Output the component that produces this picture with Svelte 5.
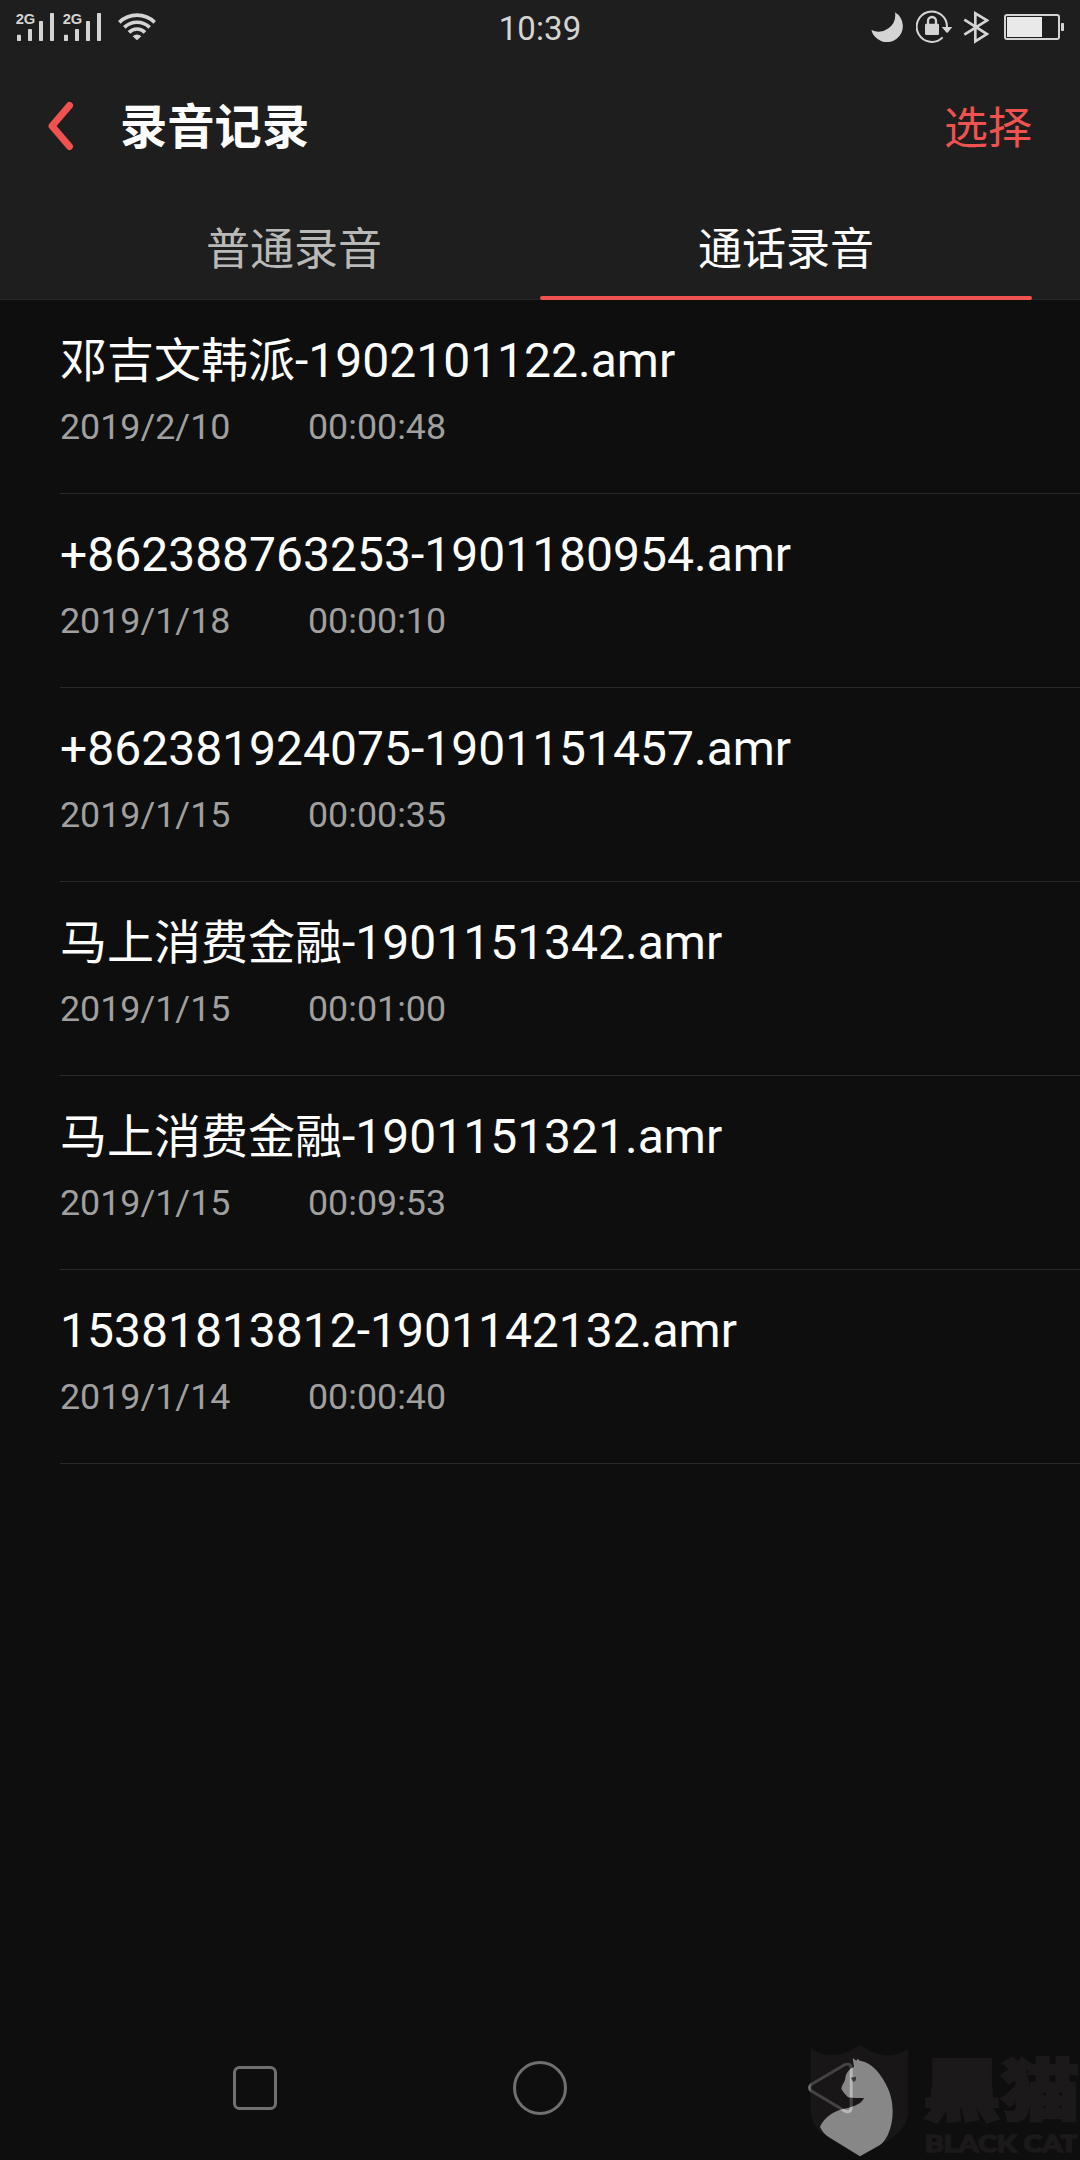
<script>
  const tabs = [
    { label: '普通录音', active: false },
    { label: '通话录音', active: true },
  ];
  const recordings = [
    { contact: '邓吉文韩派', file: '-1902101122.amr', date: '2019/2/10', length: '00:00:48' },
    { contact: '', file: '+862388763253-1901180954.amr', date: '2019/1/18', length: '00:00:10' },
    { contact: '', file: '+862381924075-1901151457.amr', date: '2019/1/15', length: '00:00:35' },
    { contact: '马上消费金融', file: '-1901151342.amr', date: '2019/1/15', length: '00:01:00' },
    { contact: '马上消费金融', file: '-1901151321.amr', date: '2019/1/15', length: '00:09:53' },
    { contact: '', file: '15381813812-1901142132.amr', date: '2019/1/14', length: '00:00:40' },
  ];
</script>

<div class="screen">
  <header>
    <div class="status">
      <div class="side">
        {#each [1, 2] as sim (sim)}
          <svg class="signal" viewBox="48 30 114 99" width="38" height="33">
            <text x="47" y="72" textLength="59" lengthAdjust="spacingAndGlyphs">2G</text>
            <rect x="51" y="104" width="12" height="19" rx="2" />
            <rect x="84" y="87" width="12" height="36" rx="2" />
            <rect x="117" y="63" width="12" height="60" rx="2" />
            <rect x="150" y="39" width="12" height="84" rx="2" />
          </svg>
        {/each}
        <svg class="wifi" viewBox="354 30 114 99" width="38" height="33">
          <path class="arc" d="M358 67 A76 76 0 0 1 464 67" />
          <path class="arc" d="M373 82 A55 55 0 0 1 449 82" />
          <path class="arc" d="M387 97 A34 34 0 0 1 435 97" />
          <path d="M398 109 A19 19 0 0 1 424 109 L411 121 Z" />
        </svg>
      </div>
      <time>10:39</time>
      <div class="side right">
        <svg viewBox="33 30 99 102" width="33" height="34">
          <path d="M105 37 A48 48 0 1 1 34 90 A50 50 0 0 0 105 37 Z" />
        </svg>
        <svg class="lock" viewBox="168 30 111 102" width="37" height="34">
          <path class="ring" d="M261 81 A45.500 45.500 0 1 0 248 112" />
          <path d="M245 81 H277 L263 98 H260 Z" />
          <rect x="195" y="71" width="42" height="34" rx="4" />
          <path class="shackle" d="M204 73 V63 A12 12 0 0 1 228 63 V73" />
        </svg>
        <svg class="bluetooth" viewBox="309 30 78 102" width="26" height="34">
          <path d="M313 59 L381 102 L346 124 V40 L381 61 L313 104" />
        </svg>
        <svg class="battery" viewBox="432 30 183 102" width="61" height="34">
          <rect class="case" x="435" y="45" width="162" height="72" rx="6" />
          <rect class="charge" x="441" y="51" width="105" height="60" />
          <rect x="603" y="69" width="9" height="24" rx="2" />
        </svg>
      </div>
    </div>

    <div class="bar">
      <svg class="back" viewBox="0 0 26 50" width="26" height="50">
        <path d="M21.500 4.500 L4 25 L21.500 45.500" />
      </svg>
      <h1>录音记录</h1>
      <span class="select">选择</span>
    </div>

    <nav class="tabs">
      {#each tabs as tab (tab.label)}
        <div class="tab" class:active={tab.active}>{tab.label}</div>
      {/each}
    </nav>
  </header>

  <main>
    {#each recordings as item (item.file)}
      <article>
        <div class="name">{#if item.contact}<span class="contact">{item.contact}</span>{/if}{item.file}</div>
        <div class="meta"><span class="date">{item.date}</span><span>{item.length}</span></div>
      </article>
    {/each}
  </main>

  <footer>
    <svg viewBox="0 0 44 44" width="44" height="44"><rect x="1.500" y="1.500" width="41" height="41" rx="5" /></svg>
    <svg viewBox="0 0 54 54" width="54" height="54"><circle cx="27" cy="27" r="25.500" /></svg>
    <svg viewBox="84 94 135 157" width="45" height="52">
      <path class="triangle" d="M93 162 L193 103 Q214 94 214 116 V230 Q214 250 195 242 L93 181 Q84 172 93 162 Z" />
    </svg>
  </footer>

  <svg class="watermark" viewBox="0 0 900 390" width="300" height="130">
    <defs>
      <path id="cat" d="M218 84 L229 92 L233 86 L240 92 C275 97 306 132 326 180 C342 220 342 272 326 308 C318 328 307 340 300 345 L240 379 L147 322 C134 313 125 303 120 290 C132 263 160 243 193 236 C222 230 244 222 252 204 C236 203 220 205 204 202 C197 194 188 185 184 176 C184 166 196 155 196 143 C198 127 210 116 222 111 Z" />
      <mask id="around-cat">
        <rect width="900" height="390" fill="white" />
        <use href="#cat" fill="black" />
      </mask>
    </defs>
    <path class="shield" mask="url(#around-cat)" d="M92 53 Q155 101 240 46 Q322 101 384 56 V245 C384 293 342 322 300 345 L240 382 L147 325 C110 300 92 274 92 240 Z" />
    <use class="cat" href="#cat" />
    <path class="eye" d="M213 143 L228 140 Q230 155 219 155 Z" />
    <text class="brand" x="428" y="254" textLength="470" lengthAdjust="spacingAndGlyphs">黑猫</text>
    <text class="latin" x="434" y="366" textLength="459" lengthAdjust="spacingAndGlyphs">BLACK CAT</text>
  </svg>
</div>

<style>
  :global(body) {
    background: #0e0e0e;
  }
  .screen {
    position: relative;
    display: flex;
    flex-direction: column;
    width: 1080px;
    height: 2160px;
    overflow: hidden;
    background: #0e0e0e;
    color: #fff;
    font-family: Roboto, 'Noto Sans CJK SC', sans-serif;
  }
  svg {
    display: block;
    flex: none;
  }
  header {
    box-sizing: border-box;
    height: 300px;
    background: #1e1e1e;
    border-bottom: 1px solid #252828;
  }
  .status {
    display: grid;
    grid-template-columns: 1fr auto 1fr;
    height: 54px;
    padding: 0 15px 0 16px;
    fill: #d4d4d4;
    color: #d4d4d4;
  }
  .side {
    display: flex;
    gap: 9px;
    padding-top: 10px;
  }
  .right {
    justify-content: flex-end;
    gap: 10px;
  }
  .signal text {
    font: bold 43px 'Liberation Sans', sans-serif;
  }
  .wifi {
    margin-left: 8px;
  }
  .arc,
  .ring,
  .shackle,
  .bluetooth path,
  .case {
    fill: none;
    stroke: #d4d4d4;
  }
  .arc {
    stroke-width: 11;
  }
  .ring,
  .case {
    stroke-width: 6;
  }
  .shackle {
    stroke-width: 7;
  }
  .bluetooth path {
    stroke-width: 8;
  }
  .lock {
    margin-left: 2px;
  }
  .battery {
    margin-left: 5px;
  }
  .charge {
    fill: #e9e9e9;
  }
  time {
    margin-left: -1px;
    font-size: 33px;
    line-height: 58px;
    letter-spacing: 0.1px;
  }
  .bar {
    display: flex;
    align-items: center;
    height: 144px;
    padding: 0 48px;
  }
  .back {
    fill: none;
    stroke: #f0524f;
    stroke-width: 7;
    stroke-linecap: round;
    stroke-linejoin: round;
  }
  h1 {
    flex: 1;
    margin: 0 0 0 46px;
    padding-top: 3px;
    font-size: 47.3px;
    font-weight: 700;
    line-height: 60px;
  }
  .select {
    padding-top: 5px;
    color: #f0524f;
    font-size: 44px;
    line-height: 60px;
  }
  .tabs {
    display: grid;
    grid-template-columns: 1fr 1fr;
    height: 102px;
    padding: 0 48px;
  }
  .tab {
    box-sizing: border-box;
    display: flex;
    flex-direction: column;
    padding-top: 4px;
    font-size: 44px;
    line-height: 97px;
    text-align: center;
    color: #b9b9b9;
  }
  .active {
    color: #fff;
  }
  .active::after {
    content: '';
    height: 4px;
    margin-top: -3px;
    border-radius: 2px;
    background: #f0524f;
  }
  main {
    flex: 1;
    padding-left: 60px;
  }
  article {
    box-sizing: border-box;
    height: 194px;
    padding-top: 29px;
    border-bottom: 1px solid #292929;
    white-space: nowrap;
  }
  .name {
    font-size: 48px;
    line-height: 64px;
  }
  .contact {
    font-size: 47px;
  }
  .meta {
    display: flex;
    margin-top: 11px;
    font-size: 35.8px;
    line-height: 46px;
    color: #a0a0a0;
  }
  .date {
    width: 248px;
  }
  footer {
    display: grid;
    grid-template-columns: 280px 295px 1fr;
    align-items: center;
    height: 144px;
    padding-left: 233px;
    fill: none;
    stroke: #707070;
    stroke-width: 3;
  }
  .triangle {
    stroke-width: 9;
  }
  .watermark {
    position: absolute;
    right: 0;
    bottom: 0;
  }
  .shield {
    fill: rgba(34, 30, 32, 0.55);
  }
  .cat {
    fill: rgba(255, 255, 255, 0.5);
  }
  .eye {
    fill: #383838;
  }
  .brand,
  .latin {
    fill: #1b191a;
    stroke: #1b191a;
  }
  .brand {
    font: 900 200px 'Noto Sans CJK SC', sans-serif;
    stroke-width: 8;
  }
  .latin {
    font: 900 66px Lato, sans-serif;
    stroke-width: 4;
  }
</style>
